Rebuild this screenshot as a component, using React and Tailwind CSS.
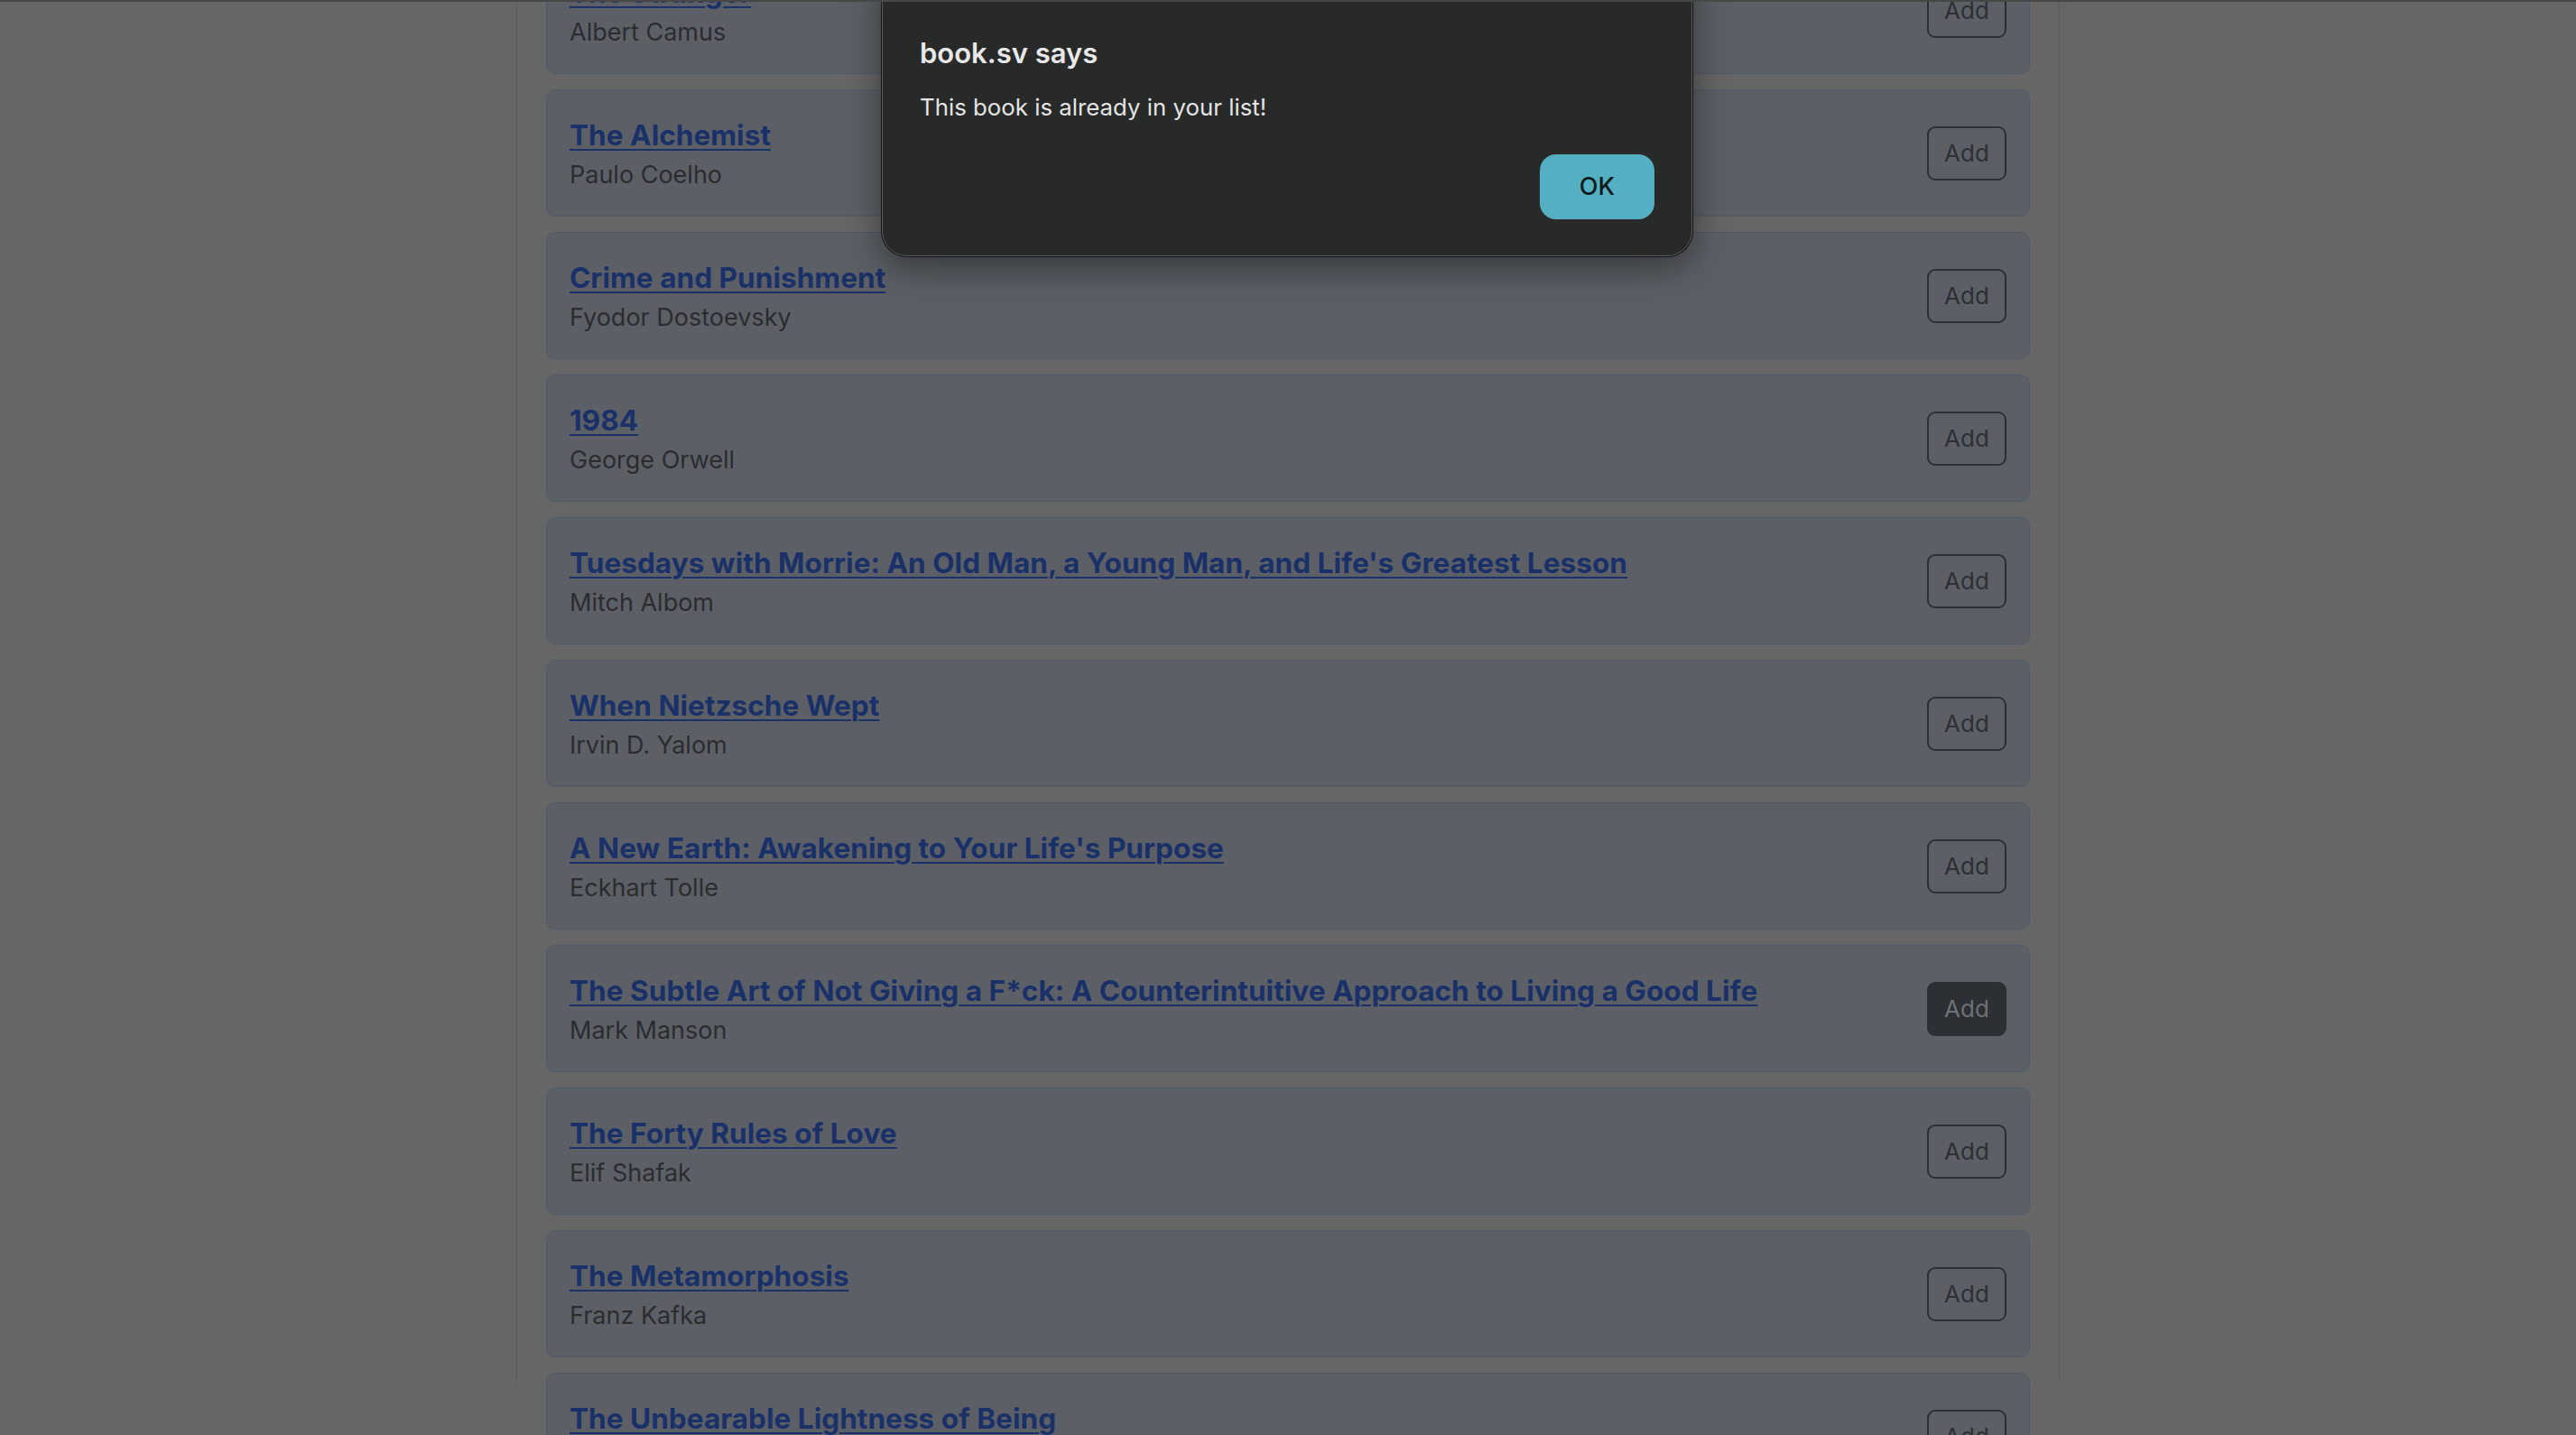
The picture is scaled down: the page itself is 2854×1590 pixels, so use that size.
import React from "react";

const books = [
  { title: "The Stranger", author: "Albert Camus" },
  { title: "The Alchemist", author: "Paulo Coelho" },
  { title: "Crime and Punishment", author: "Fyodor Dostoevsky" },
  { title: "1984", author: "George Orwell" },
  { title: "Tuesdays with Morrie: An Old Man, a Young Man, and Life's Greatest Lesson", author: "Mitch Albom" },
  { title: "When Nietzsche Wept", author: "Irvin D. Yalom" },
  { title: "A New Earth: Awakening to Your Life's Purpose", author: "Eckhart Tolle" },
  { title: "The Subtle Art of Not Giving a F*ck: A Counterintuitive Approach to Living a Good Life", author: "Mark Manson", active: true },
  { title: "The Forty Rules of Love", author: "Elif Shafak" },
  { title: "The Metamorphosis", author: "Franz Kafka" },
  { title: "The Unbearable Lightness of Being", author: "Milan Kundera" },
];

function Card({ book }) {
  return (
    <div className="flex items-center justify-between h-[141px] shrink-0 rounded-[10px] border border-[#4f5a6b] bg-[#5c6066] pl-[25px] pr-[25px]">
      <div className="flex flex-col">
        <a className="text-[31.6px] leading-[44px] font-bold text-[#1a3068] underline decoration-[2px] underline-offset-[4px] cursor-pointer">
          {book.title}
        </a>
        <div className="mt-[4px] text-[27px] leading-[36px] text-[#2a2c30]">{book.author}</div>
      </div>
      {book.active ? (
        <button className="w-[88px] h-[60px] rounded-[9px] border-2 border-[#2c2f33] bg-[#2c2f33] text-[26px] text-[#6e7175]">
          Add
        </button>
      ) : (
        <button className="w-[88px] h-[60px] rounded-[9px] border-2 border-[#2c2f33] bg-transparent text-[26px] text-[#2c2f33]">
          Add
        </button>
      )}
    </div>
  );
}

export default function App() {
  return (
    <div
      className="relative h-screen w-full overflow-hidden bg-[#666666]"
      style={{ fontFamily: "Inter, 'Noto Sans', sans-serif" }}
    >
      <div className="absolute inset-x-0 top-0 z-20 h-[2px] bg-[#474747]" />
      <div className="mx-auto h-full w-[1710px] border-x border-[#595a5c] px-[32px]">
        <div className="-mt-[59px] flex flex-col gap-[17px]">
          {books.map((b) => (
            <Card key={b.title} book={b} />
          ))}
        </div>
      </div>

      <div className="absolute left-[977px] top-[-40px] z-10 flex w-[898px] flex-col rounded-[28px] border border-[#5e5e5e] bg-[#282a2a] pl-[41px] pr-[41px] pt-[79px] pb-[40px] shadow-[0_0_0_1px_#111,0_12px_40px_rgba(0,0,0,0.45)]">
        <div className="text-[31px] leading-[38px] font-semibold text-[#e8e8e8]">book.sv says</div>
        <div className="mt-[25px] text-[25.8px] leading-[32px] text-[#e4e4e4]">This book is already in your list!</div>
        <div className="mt-[36px] flex justify-end">
          <button className="h-[72px] w-[127px] rounded-[18px] bg-[#55afc2] text-[27px] font-medium text-[#0f1a1c]">
            OK
          </button>
        </div>
      </div>
    </div>
  );
}
